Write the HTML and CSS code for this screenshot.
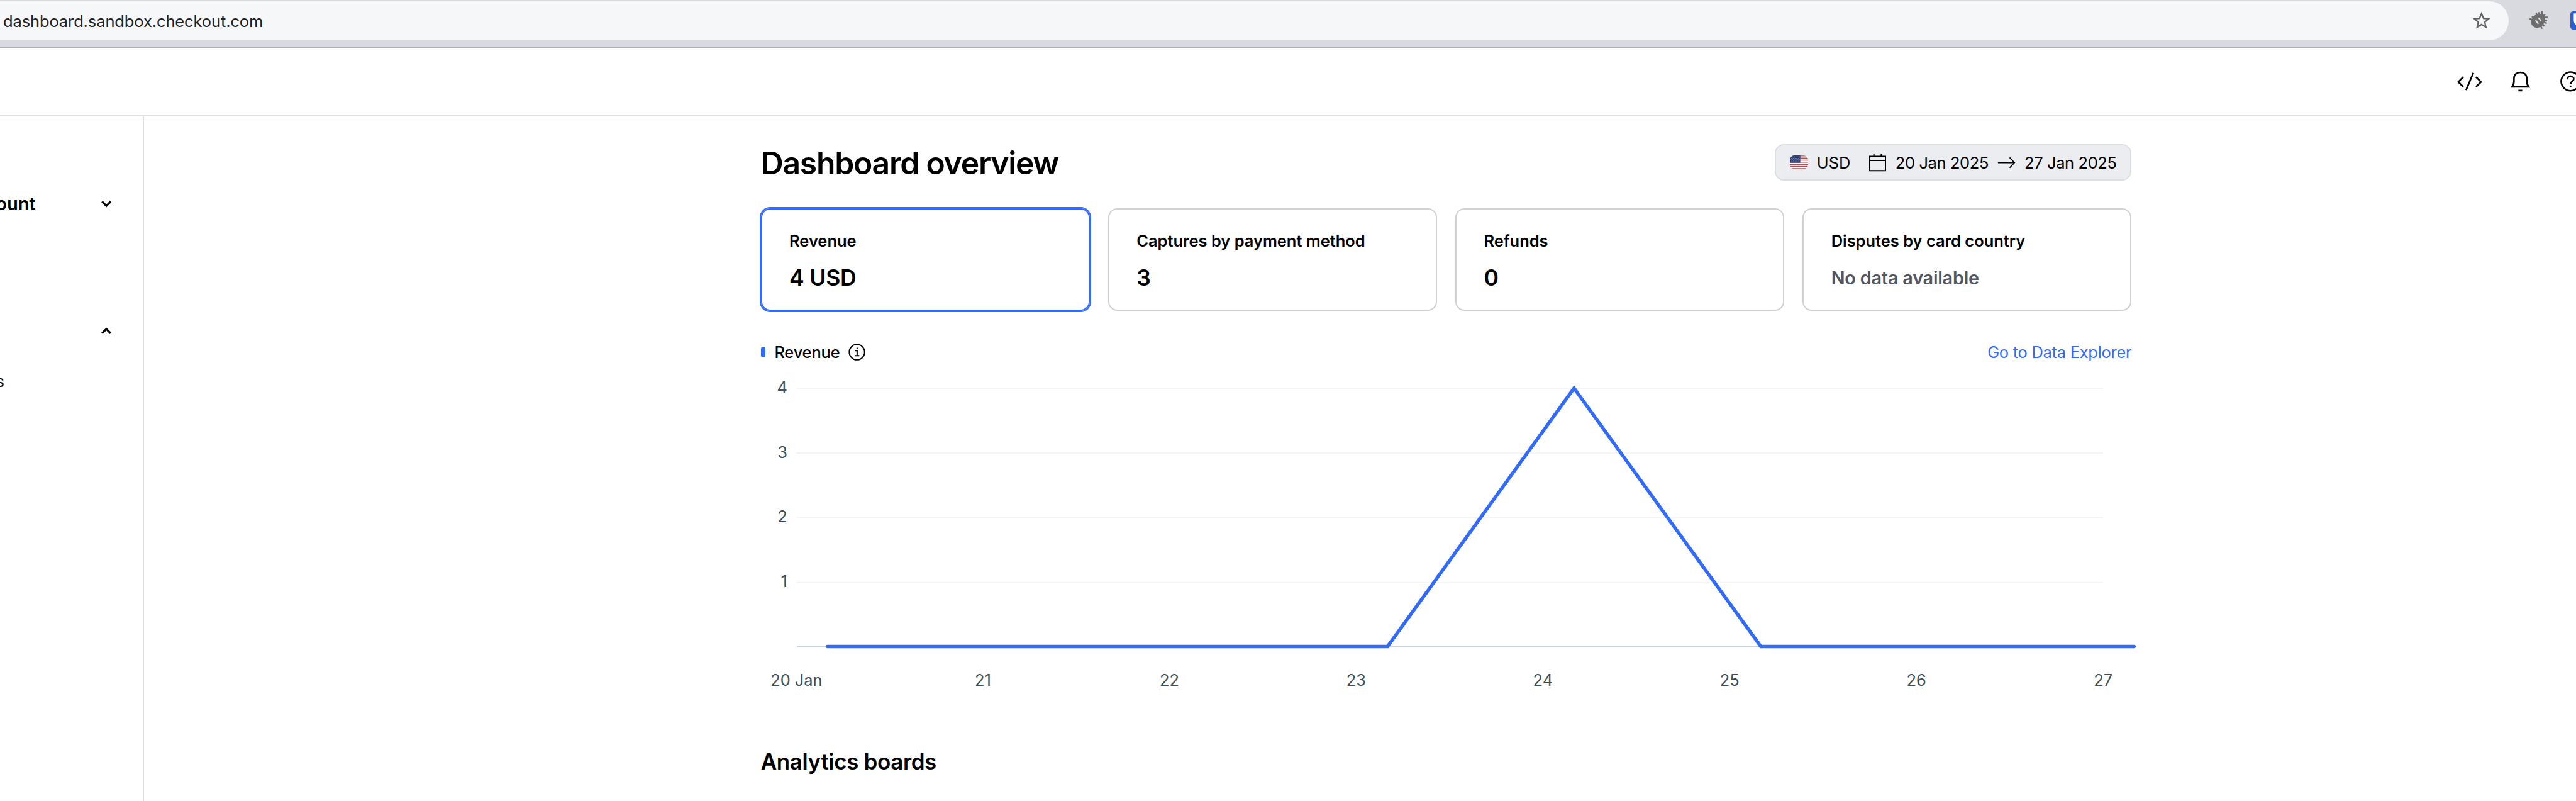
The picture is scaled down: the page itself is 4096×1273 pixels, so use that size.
FILE: index.html
```html
<!DOCTYPE html>
<html lang="en">
<head>
<meta charset="utf-8">
<title>Dashboard overview</title>
<link rel="stylesheet" href="styles.css">
</head>
<body>
<div class="toolbar">
  <div class="address">
    <span class="url">dashboard.sandbox.checkout.com</span>
    <svg class="star" viewBox="0 0 24 24"><path d="M22 9.24l-7.19-.62L12 2 9.19 8.63 2 9.24l5.46 4.73L5.82 21 12 17.27 18.18 21l-1.63-7.03L22 9.24zM12 15.4l-3.76 2.27 1-4.28-3.32-2.88 4.38-.38L12 6.1l1.71 4.04 4.38.38-3.32 2.88 1 4.28L12 15.4z"/></svg>
  </div>
  <svg class="extension" viewBox="0 0 32 32">
    <path class="legs" d="M22 0V9M11.5 2.5L14 8M16 1.5L17 6M32 10.3H25M24 8L27.5 5M30.5 21L25 19M27 16H31M22 30.5L19.500 25M23 23L26 26M0 13L7 15M4 9.500L9 11"/>
    <ellipse cx="15.300" cy="16.500" rx="13.500" ry="11.300" transform="rotate(-45 15.300 16.500)"/>
    <path class="eyes" d="M11.500 16.500L15 21M16.500 12L20 16.500"/>
  </svg>
  <svg class="vault" viewBox="0 0 32 32"><rect width="32" height="32" rx="5" fill="#2b5dd7"/><path d="M6 3.500H26V16C26 22 21 26 16 29C10 25.500 6 21 6 16Z" fill="#fff"/></svg>
</div>
<header class="header">
  <svg class="icon code" viewBox="0 0 48 36"><path d="M13 10.200L4.200 18.900L13 27.600M30.600 3L17.800 33.200M35.200 10.200L44 18.900L35.200 27.600"/></svg>
  <svg class="icon bell" viewBox="0 0 36 36"><path d="M3.700 27.400C6 24.500 7 21 7 17.500V12.500C7 6.200 11.800 2.200 18.200 2.200S29.400 6.200 29.400 12.500V17.500C29.400 21 30.400 24.500 32.700 27.400Z"/><path d="M14.700 34H21.500"/></svg>
  <svg class="icon help" viewBox="0 0 36 36"><circle cx="18" cy="18" r="16.400"/><path d="M12.300 14.500C12.300 11 14.800 9 18 9S23.700 11 23.700 13.800C23.700 17.900 18 17.700 18 22.800"/><path d="M18 25.200V28"/></svg>
</header>
<div class="layout">
  <nav class="sidebar">
    <div class="row account"><span class="account-name">ount</span><svg class="chevron" viewBox="0 0 20 20"><path d="M2.500 6L10 13.500L17.500 6"/></svg></div>
    <div class="row group"><svg class="chevron" viewBox="0 0 20 20"><path d="M2.500 14L10 6.500L17.500 14"/></svg></div>
    <div class="row item">s</div>
  </nav>
  <main class="main">
    <div class="heading">
      <h1>Dashboard overview</h1>
      <div class="filter">
        <svg class="flag" viewBox="0 0 32 24">
          <defs><clipPath id="round"><rect width="32" height="24" rx="8"/></clipPath></defs>
          <g clip-path="url(#round)">
            <rect width="32" height="24" fill="#fff"/>
            <path d="M0 .92H32M0 4.620H32M0 8.310H32M0 12H32M0 15.690H32M0 19.380H32M0 23.080H32" stroke="#c0474d" stroke-width="1.600"/>
            <rect width="18.300" height="12.900" fill="#2c3c73"/>
            <path d="M1.500 2.500H18M2.500 5H18M1.500 7.500H18M2.500 10H18" stroke="#8d97b8" stroke-width="1" stroke-dasharray="1 2"/>
          </g>
        </svg>
        <span class="currency">USD</span>
        <svg class="calendar" viewBox="0 0 32 32"><path d="M2.200 5H29.800V30H2.200ZM2.200 12.200H29.800M9.500 1V5M22.500 1V5"/></svg>
        <span class="date">20 Jan 2025</span>
        <svg class="arrow" viewBox="0 0 32 32"><path d="M1 16H30M21.500 7L30 16L21.500 25"/></svg>
        <span class="date">27 Jan 2025</span>
      </div>
    </div>
    <div class="cards">
      <section class="card selected"><h2>Revenue</h2><p>4 USD</p></section>
      <section class="card"><h2>Captures by payment method</h2><p>3</p></section>
      <section class="card"><h2>Refunds</h2><p>0</p></section>
      <section class="card"><h2>Disputes by card country</h2><p class="empty">No data available</p></section>
    </div>
    <div class="legend">
      <span class="swatch"></span><span class="series">Revenue</span>
      <svg class="info" viewBox="0 0 30 30"><circle cx="15" cy="15" r="13.500"/><path d="M11.800 12.500H15.300V21M11 21.300H19.200M15.300 7.300V9.500"/></svg>
      <a class="explore">Go to Data Explorer</a>
    </div>
    <svg class="chart" viewBox="1332 636 2412 590">
      <path class="grid" d="M1394 680H3682M1394 793.500H3682M1394 906.500H3682M1394 1020H3682"/>
      <path class="axis" d="M1395 1132H3682"/>
      <path class="line" d="M1448 1132H2429L2755.500 680L3082.500 1132H3736"/>
      <g class="ticks-y">
        <text x="1378" y="688.500">4</text><text x="1378" y="802">3</text><text x="1378" y="915">2</text><text x="1378" y="1028">1</text>
      </g>
      <g class="ticks-x">
        <text x="1394" y="1200.500">20 Jan</text><text x="1720.500" y="1200.500">21</text><text x="2047" y="1200.500">22</text><text x="2374" y="1200.500">23</text><text x="2701" y="1200.500">24</text><text x="3028" y="1200.500">25</text><text x="3355" y="1200.500">26</text><text x="3682" y="1200.500">27</text>
      </g>
    </svg>
    <h3 class="boards">Analytics boards</h3>
  </main>
</div>
</body>
</html>
```
FILE: styles.css
```css
* { box-sizing: border-box; margin: 0; }
body {
  height: 1273px;
  overflow: hidden;
  background: #fff;
  color: #000;
  font-family: Inter, "Liberation Sans", sans-serif;
  font-size: 25.43px;
}
svg { display: block; flex: none; fill: none; }

/* Browser toolbar */
.toolbar {
  display: flex;
  height: 76px;
  padding-top: 2px;
  overflow: hidden;
  background: #d9dae0;
  border-bottom: 2px solid #adafb6;
}
.address {
  display: flex;
  flex: none;
  align-items: center;
  justify-content: space-between;
  width: 3989px;
  height: 62px;
  padding: 0 26.8px 0 5px;
  background: #f5f7f9;
  border-radius: 0 31px 31px 0;
  color: #202226;
}
.url { letter-spacing: -.08px; }
.star { width: 33.6px; height: 33.6px; fill: #5f6164; }
.extension { width: 29px; height: 29px; margin: 16px 0 0 32.700px; fill: #6e6e6e; }
.legs { stroke: #6e6e6e; stroke-width: 2.600; }
.eyes { stroke: #d9dae0; stroke-width: 2.600; stroke-linecap: round; }
.vault { width: 29px; height: 29px; margin: 16px 0 0 36.300px; }

/* Application header */
.header {
  display: flex;
  align-items: center;
  justify-content: flex-end;
  height: 109px;
  overflow: hidden;
  border-bottom: 2px solid #dcdfe4;
}
.icon { stroke: #000; stroke-width: 2.900; }
.code { width: 43.600px; height: 32.700px; }
.bell { width: 32.700px; height: 32.700px; margin-left: 41.800px; }
.help { width: 32.700px; height: 32.700px; margin: 0 -7.300px 0 47.200px; }

.layout { display: flex; height: 1088px; }

/* Sidebar */
.sidebar {
  flex: none;
  width: 229px;
  padding-top: 118.800px;
  border-right: 2px solid #dcdfe4;
}
.row {
  display: flex;
  align-items: center;
  height: 40px;
  padding-right: 49px;
}
.account { justify-content: space-between; font-size: 29.060px; font-weight: 600; }
.account-name { margin-left: -6.800px; }
.group { justify-content: flex-end; margin-top: 162.500px; }
.item { margin: 39px 0 0 -6.500px; }
.chevron { width: 18.200px; height: 18.200px; stroke: #000; stroke-width: 3.600; }

/* Overview */
.main { width: 2179.700px; margin-left: 980.700px; padding-top: 44px; }
.heading { display: flex; align-items: center; justify-content: space-between; height: 58px; }
h1 { padding-top: 2px; font-size: 49.800px; font-weight: 600; letter-spacing: -1.240px; white-space: nowrap; }
.filter {
  display: flex;
  align-items: center;
  gap: 14px;
  height: 58px;
  padding: 0 21.800px;
  background: #ecedf0;
  border: 2px solid #dcdfe4;
  border-radius: 14.500px;
  white-space: nowrap;
}
.flag { width: 29px; height: 21.800px; }
.currency { margin-right: 14.500px; }
.calendar { width: 29px; height: 29px; stroke: #000; stroke-width: 2.200; }
.arrow { width: 29px; height: 29px; stroke: #000; stroke-width: 2; }
.date { letter-spacing: -.36px; }

.cards {
  display: grid;
  grid-template-columns: repeat(4, 1fr);
  gap: 29.060px;
  margin-top: 43.600px;
}
.card {
  height: 163.200px;
  padding: 32.400px 43.400px 0;
  border: 2px solid #d1d1d8;
  border-radius: 14.500px;
}
.selected { border-color: #326bfa; box-shadow: 0 0 0 2px #326bfa; }
.card h2 { font-size: 25.430px; font-weight: 600; line-height: 36px; white-space: nowrap; }
.card p { margin-top: 16.500px; font-size: 35.500px; font-weight: 600; line-height: 50px; letter-spacing: -.2px; }
.card .empty { font-size: 28.800px; color: #515761; letter-spacing: -.2px; }

.legend { display: flex; align-items: center; height: 36px; margin-top: 47.700px; }
.swatch { width: 7.300px; height: 16.400px; border-radius: 3.600px; background: #326bfa; }
.series { margin-left: 14.400px; font-weight: 500; letter-spacing: -.15px; }
.info { width: 27.200px; height: 27.200px; margin-left: 14px; stroke: #000; stroke-width: 2.200; }
.explore { margin-left: auto; color: #326bfa; letter-spacing: -.25px; }

.chart { width: 2190.600px; height: 535.800px; }
.grid { stroke: #f4f4f5; stroke-width: 2.200; }
.axis { stroke: #c8d2da; stroke-width: 2.200; }
.line { stroke: #326bfa; stroke-width: 6; stroke-linecap: round; stroke-linejoin: miter; }
.chart text { fill: #3f4f59; font-size: 28px; }
.ticks-y { text-anchor: end; }
.ticks-x { text-anchor: middle; }
.boards { margin-top: 74.400px; font-size: 35px; font-weight: 600; line-height: 44px; letter-spacing: -.38px; }
```
